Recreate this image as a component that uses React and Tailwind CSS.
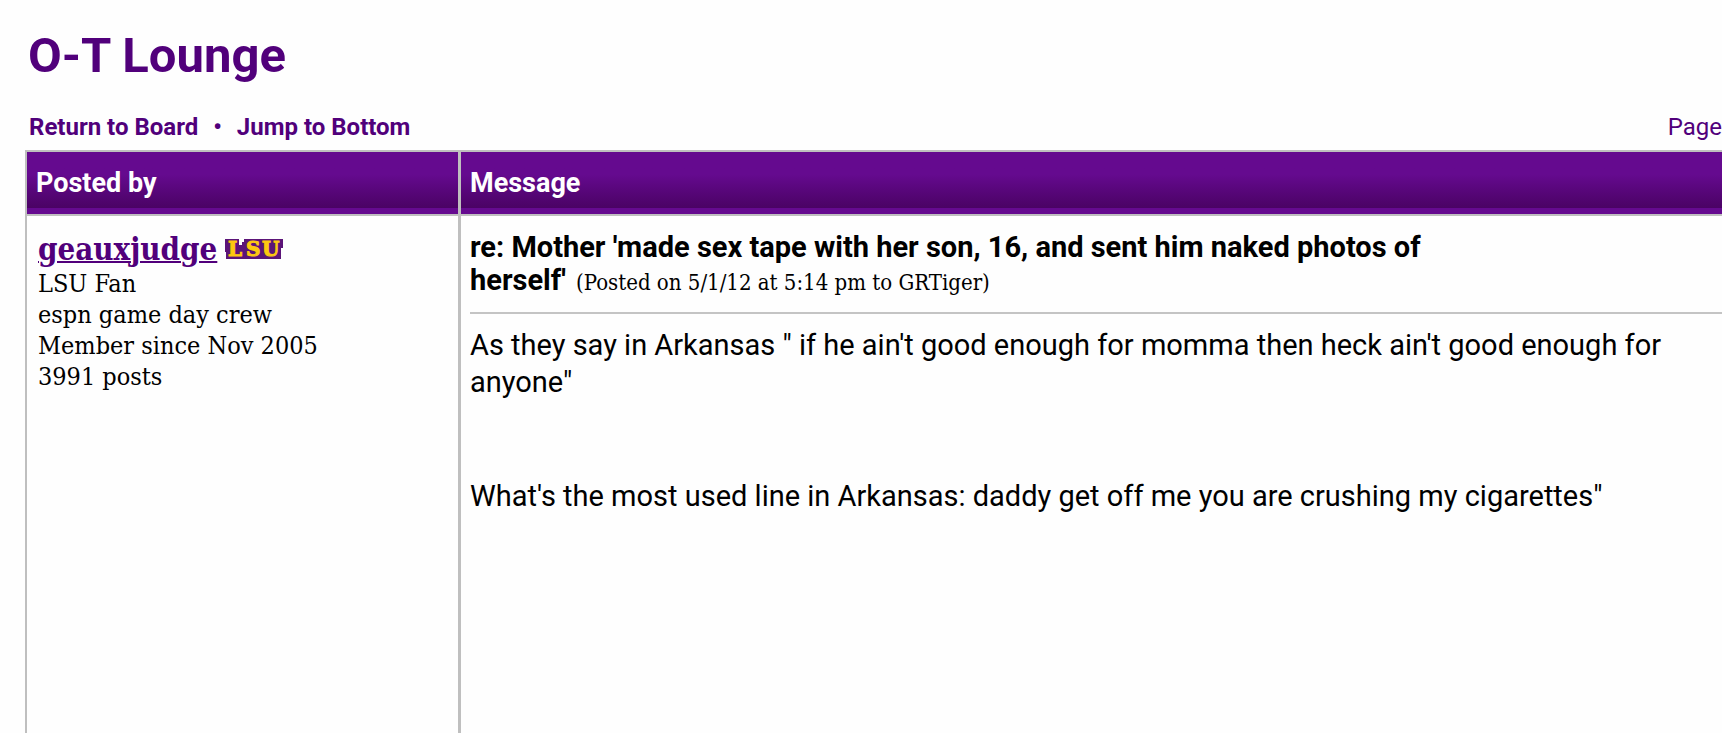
import React from 'react'

const details = ['LSU Fan', 'espn game day crew', 'Member since Nov 2005', '3991 posts']

const headCell = "h-[62px] px-[9px] pt-[5px] border-b-[6px] border-[#650a8f] bg-linear-to-b from-[#650a8f] from-40% to-[#4a0364] text-left text-[27px] leading-8 font-bold text-white"

const TeamLogo = () => (
    <svg width="58" height="20" viewBox="0 0 58 20" role="img" aria-label="LSU" className="overflow-visible">
        <path d="M0 0H14V6H17V3H19V0H58V9H56V20H1V13H0Z" fill="#5b1478" />
        <text
            x="3 21 37"
            y="17"
            fontSize="20"
            fontWeight="700"
            fontFamily="DejaVu Serif, serif"
            fill="#fdc80f"
            stroke="#fdc80f"
            strokeWidth="1"
        >
            LSU
        </text>
    </svg>
)

const ForumTable = () => (
    <table className="w-full grow border-separate border-spacing-0 border-t-2 border-l-2 border-[#bfbfbf]">
        <thead>
            <tr>
                <th scope="col" className={`${headCell} w-[431px]`}>Posted by</th>
                <th className="w-[3px] bg-[#bfbfbf] p-0" aria-hidden="true"></th>
                <th scope="col" className={headCell}>Message</th>
            </tr>
        </thead>
        <tbody>
            <tr className="align-top">
                <td className="border-t-2 border-[#bfbfbf] px-[11px] pt-[14px] font-['DejaVu_Serif_Condensed','DejaVu_Serif',serif]">
                    <div className="flex items-center gap-2">
                        <a href="#profile" className="text-[31px] leading-[38px] font-bold text-[#51007b] underline decoration-2">
                            geauxjudge
                        </a>
                        <TeamLogo />
                    </div>
                    {details.map((line) => (
                        <p key={line} className="text-[25px] leading-[31px]">{line}</p>
                    ))}
                </td>
                <td className="bg-[#bfbfbf] p-0"></td>
                <td className="border-t-2 border-[#bfbfbf] pt-[15px] pl-[9px]">
                    <div className="border-b-2 border-[#c4c4c4] pb-[13px]">
                        <h2 className="max-w-5xl text-[29px] leading-[33px] font-bold">
                            re: Mother 'made sex tape with her son, 16, and sent him naked photos of herself'
                            <span className="ml-[10px] font-['DejaVu_Serif_Condensed','DejaVu_Serif',serif] text-[22px] font-normal">
                                (Posted on 5/1/12 at 5:14 pm to GRTiger)
                            </span>
                        </h2>
                    </div>
                    <div className="pt-[13px] text-[29px] leading-[37px]">
                        <p className="mb-[77px]">
                            As they say in Arkansas " if he ain't good enough for momma then heck ain't good enough for anyone"
                        </p>
                        <p>What's the most used line in Arkansas: daddy get off me you are crushing my cigarettes"</p>
                    </div>
                </td>
            </tr>
        </tbody>
    </table>
)

const App = () => {
    return (
        <div className="flex min-h-screen flex-col bg-[#fefefe] pl-[25px] font-[Roboto,sans-serif] text-black">
            <h1 className="pt-7 pl-[3px] text-[49px] leading-14 font-bold text-[#51007b]">O-T Lounge</h1>

            {/* Thread links */}
            <nav className="mt-7 mb-2 flex items-center justify-between pl-1 text-[24px] leading-[30px] text-[#51007b]">
                <div className="flex gap-[15px] font-bold">
                    <a href="#board">Return to Board</a>
                    <span>•</span>
                    <a href="#bottom">Jump to Bottom</a>
                </div>
                <span>Page</span>
            </nav>

            <ForumTable />
        </div>
    )
}

export default App
